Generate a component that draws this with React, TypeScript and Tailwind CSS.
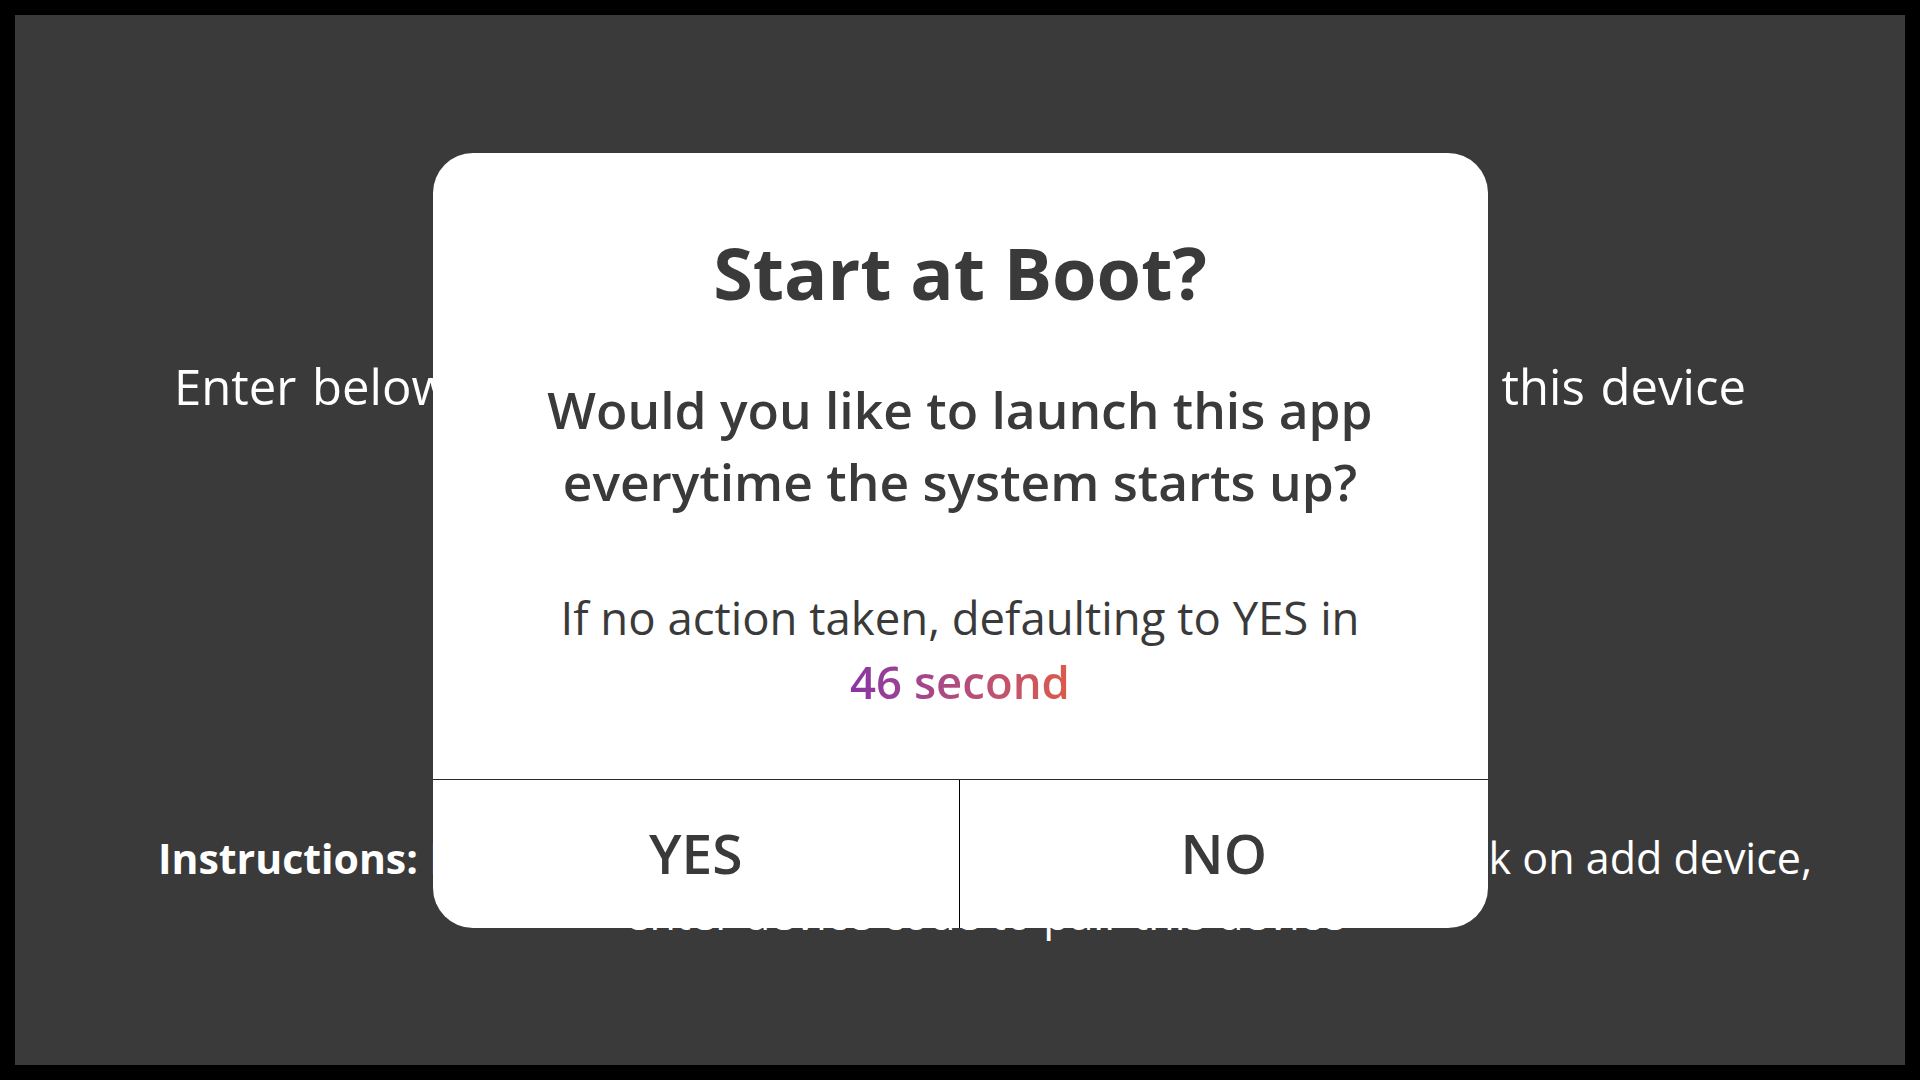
import React from 'react';

const BootPrompt: React.FC<{ seconds: number }> = ({ seconds }) => {
  return (
    <div className="absolute inset-0 flex items-center justify-center">
      <div className="w-[1055px] h-[775px] bg-white rounded-[40px] overflow-hidden flex flex-col text-[#3a3a3a]">
        {/* BODY */}
        <div className="flex-1 flex flex-col items-center pt-[82px] text-center">
          <h1 className="text-[72px] leading-[75px] font-bold">Start at Boot?</h1>
          <p className="mt-[63px] text-[51.5px] leading-[72px] font-semibold">
            Would you like to launch this app
            <br />
            everytime the system starts up?
          </p>
          <p className="mt-[68px] text-[45.5px] leading-[64px]">
            If no action taken, defaulting to YES in
            <br />
            <span className="font-semibold bg-linear-to-r from-[#8a33a3] to-[#dc5a48] bg-clip-text text-transparent">
              {seconds} second
            </span>
          </p>
        </div>

        {/* ACTIONS */}
        <div className="h-[149px] grid grid-cols-2 border-t-[1.5px] border-[#2a2a2a]">
          <button className="border-r-[1.5px] border-black text-[55px] font-semibold flex items-center justify-center">
            YES
          </button>
          <button className="text-[55px] font-semibold flex items-center justify-center">
            NO
          </button>
        </div>
      </div>
    </div>
  );
};

export default function App() {
  return (
    <div
      className="relative h-screen w-full bg-black p-[15px]"
      style={{ fontFamily: '"Open Sans", "Liberation Sans", sans-serif' }}
    >
      <div className="h-full w-full bg-[#3a3a3a] flex flex-col items-center text-white">
        <p className="mt-[347px] text-[49px] leading-[49px] whitespace-nowrap [word-spacing:3px]">
          Enter below code in the companion phone app to set up this device
        </p>
        <p className="mt-[419px] pl-[50px] text-[43px] leading-[56px] text-center whitespace-nowrap">
          <span className="font-bold text-[41px]">Instructions:</span> Download the app to your phone, log in and then click on add device,
          <br />
          enter device code to pair this device
        </p>
      </div>

      <BootPrompt seconds={46} />
    </div>
  );
}
